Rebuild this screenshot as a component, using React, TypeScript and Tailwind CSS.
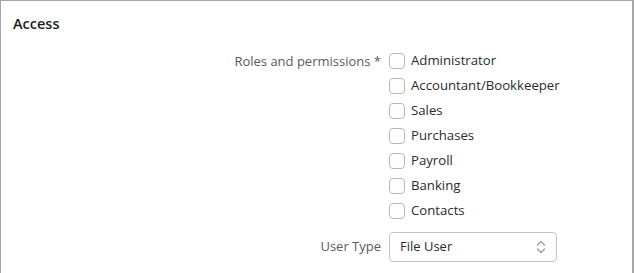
const roles = ['Administrator', 'Accountant/Bookkeeper', 'Sales', 'Purchases', 'Payroll', 'Banking', 'Contacts']

function Chevrons() {
  return (
    <svg width="10" height="14" viewBox="0 0 10 14" fill="none" stroke="#9a9a9a" strokeWidth="1.2" strokeLinecap="round" strokeLinejoin="round">
      <path d="M1.5 5 L5 1.5 L8.5 5" />
      <path d="M1.5 9 L5 12.5 L8.5 9" />
    </svg>
  )
}

export default function App() {
  return (
    <div className="w-[634px] h-[273px] bg-white overflow-hidden" style={{ fontFamily: '"Open Sans", "Noto Sans", sans-serif' }}>
      <div className="h-full border-t border-l border-r-2 border-[#a6a6a6] pl-3 pt-[13px]">
        <h2 className="text-[14.5px] leading-5 font-semibold text-[#1e1e1e]">Access</h2>
        <div className="mt-[17px] flex flex-col gap-[11px]">
          <div className="flex gap-2">
            <div className="w-[368px] text-right text-[13px] leading-[20px] text-[#5a5a5a]">Roles and permissions *</div>
            <div className="flex flex-col gap-[5px]">
              {roles.map(r => (
                <label key={r} className="flex items-center gap-[6px] h-5">
                  <span className="w-4 h-4 rounded-[4px] border border-[#b8b8b8] bg-white" />
                  <span className="text-[13.2px] text-[#2b2b2b]">{r}</span>
                </label>
              ))}
            </div>
          </div>
          <div className="flex items-center gap-2">
            <div className="w-[368px] text-right text-[13px] text-[#5a5a5a]">User Type</div>
            <div className="w-[168px] h-[30px] rounded-[4px] border border-[#c4c4c4] flex items-center justify-between pl-[10px] pr-[10px]">
              <span className="text-[13px] text-[#2b2b2b]">File User</span>
              <Chevrons />
            </div>
          </div>
        </div>
      </div>
    </div>
  )
}
